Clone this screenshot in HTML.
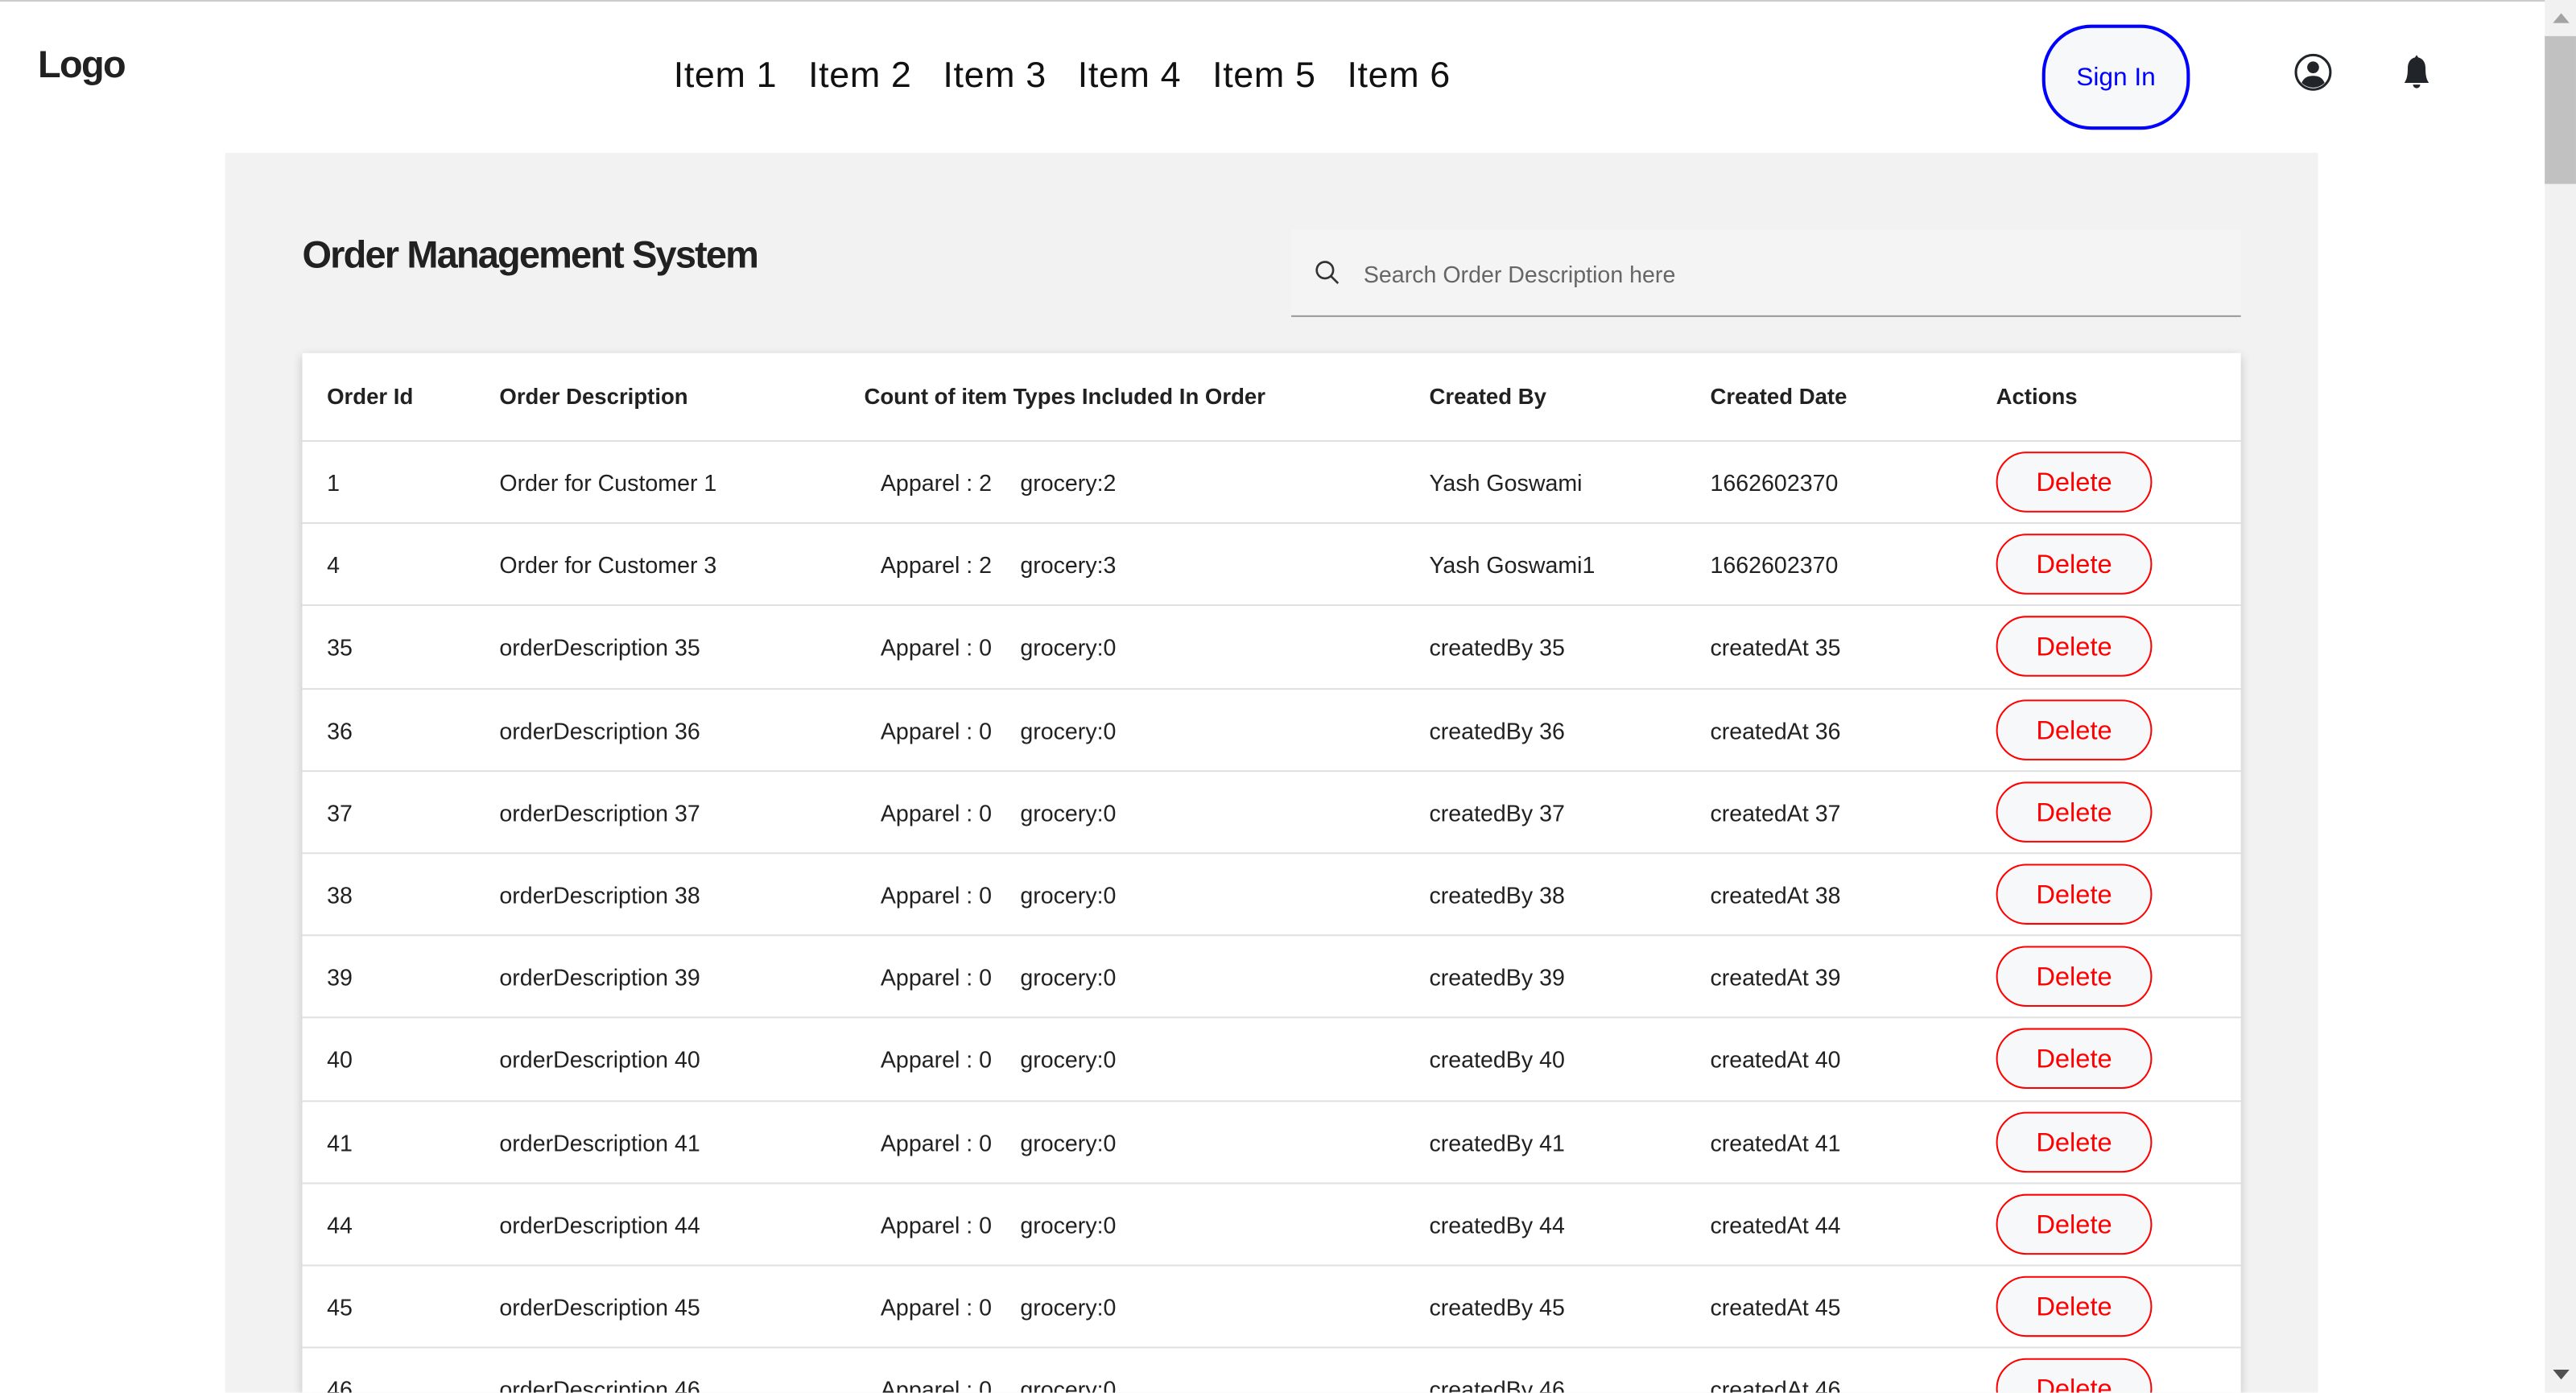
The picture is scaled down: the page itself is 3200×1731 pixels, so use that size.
<!DOCTYPE html>
<html><head><meta charset="utf-8"><style>
html,body{margin:0;padding:0;width:3200px;height:1730px;overflow:hidden;background:#fff}
#w{position:absolute;left:0;top:0;width:1568px;height:848px;transform:scale(2.0408);transform-origin:0 0;font-family:"Liberation Sans",sans-serif;color:#212121;overflow:hidden}
.a{position:absolute;white-space:nowrap}
.nav{font-size:22px;top:33px;color:#111;letter-spacing:0.3px}
.panel{left:137px;top:93px;width:1274px;height:755px;background:#f2f2f2}
.card{left:184px;top:215px;width:1180px;height:633px;background:#fff;box-shadow:0 2px 6px rgba(0,0,0,.2);overflow:hidden}
.row{position:absolute;left:0;width:1180px;height:50px;border-top:1px solid #e0e0e0;font-size:14px}
.row span{position:absolute;top:17px}
.del{position:absolute;left:1031px;top:6px;width:91px;height:35px;border:1.5px solid #f00;border-radius:19px;background:#f7f8fa;color:#f00;font-size:16px;text-align:center;line-height:37px;box-sizing:content-box;padding:0 1px}
.hd span{position:absolute;top:19px;font-weight:bold;font-size:13.5px}
</style></head><body><div id="w">
<div class="a" style="left:0;top:0;width:1568px;height:1px;background:#ccc"></div>
<div class="a" style="left:23px;top:26px;font-size:23px;font-weight:bold;letter-spacing:-0.8px">Logo</div>
<div class="a nav" style="left:410px">Item 1</div>
<div class="a nav" style="left:492px">Item 2</div>
<div class="a nav" style="left:574px">Item 3</div>
<div class="a nav" style="left:656px">Item 4</div>
<div class="a nav" style="left:738px">Item 5</div>
<div class="a nav" style="left:820px">Item 6</div>
<div class="a" style="left:1243px;top:15px;width:86px;height:60px;border:2px solid #00f;border-radius:30px;background:#f7f8fa;color:#00f;font-size:15.5px;text-align:center;line-height:62px">Sign In</div>
<svg class="a" style="left:1396px;top:32px" width="24" height="24" viewBox="0 0 24 24"><circle cx="12" cy="12" r="10.5" fill="none" stroke="#212529" stroke-width="1.5"/><circle cx="12" cy="9" r="3.6" fill="#212529"/><path d="M5 18.5C6.5 15 9 14.2 12 14.2s5.5.8 7 4.3A10 10 0 0 1 5 18.5z" fill="#212529"/></svg>
<svg class="a" style="left:1459px;top:32px" width="24" height="24" viewBox="0 0 24 24"><path d="M12 1.5l1 1.5c3 .7 4.4 3.3 4.4 6.5 0 5 .8 7 2.1 9H4.5c1.3-2 2.1-4 2.1-9 0-3.2 1.4-5.8 4.4-6.5z" fill="#212529"/><path d="M9.8 19.5h4.4a2.2 2.2 0 0 1-4.4 0z" fill="#212529"/></svg>
<div class="a" style="left:1549px;top:0;width:19px;height:848px;background:#f1f1f1"></div>
<div class="a" style="left:1549px;top:22px;width:19px;height:90px;background:#c1c1c1"></div>
<div class="a" style="left:1554px;top:8px;width:0;height:0;border-left:5px solid transparent;border-right:5px solid transparent;border-bottom:6px solid #a3a3a3"></div>
<div class="a" style="left:1554px;top:834px;width:0;height:0;border-left:5px solid transparent;border-right:5px solid transparent;border-top:6px solid #505050"></div>
<div class="a panel"></div>
<div class="a" style="left:184px;top:142px;font-size:23px;font-weight:bold;letter-spacing:-0.9px;color:#212121">Order Management System</div>
<div class="a" style="left:786px;top:140px;width:578px;height:52px;background:#f4f4f4;border-bottom:1px solid #999"></div>
<svg class="a" style="left:800px;top:158px" width="16" height="16" viewBox="0 0 16 16"><circle cx="6.5" cy="6.5" r="5" fill="none" stroke="#333" stroke-width="1.3"/><path d="M10.2 10.2L14.5 14.5" stroke="#333" stroke-width="1.3"/></svg>
<div class="a" style="left:830px;top:159px;font-size:14px;color:#666">Search Order Description here</div>
<div class="a card">
<div class="hd" style="position:absolute;left:0;top:0;width:1180px;height:53px">
<span style="left:15px">Order Id</span><span style="left:120px">Order Description</span><span style="left:342px">Count of item Types Included In Order</span><span style="left:686px">Created By</span><span style="left:857px">Created Date</span><span style="left:1031px">Actions</span></div>
<div class="row" style="top:53px"><span style="left:15px">1</span><span style="left:120px">Order for Customer 1</span><span style="left:352px">Apparel : 2</span><span style="left:437px">grocery:2</span><span style="left:686px">Yash Goswami</span><span style="left:857px">1662602370</span><div class="del">Delete</div></div>
<div class="row" style="top:103.2px"><span style="left:15px">4</span><span style="left:120px">Order for Customer 3</span><span style="left:352px">Apparel : 2</span><span style="left:437px">grocery:3</span><span style="left:686px">Yash Goswami1</span><span style="left:857px">1662602370</span><div class="del">Delete</div></div>
<div class="row" style="top:153.4px"><span style="left:15px">35</span><span style="left:120px">orderDescription 35</span><span style="left:352px">Apparel : 0</span><span style="left:437px">grocery:0</span><span style="left:686px">createdBy 35</span><span style="left:857px">createdAt 35</span><div class="del">Delete</div></div>
<div class="row" style="top:203.6px"><span style="left:15px">36</span><span style="left:120px">orderDescription 36</span><span style="left:352px">Apparel : 0</span><span style="left:437px">grocery:0</span><span style="left:686px">createdBy 36</span><span style="left:857px">createdAt 36</span><div class="del">Delete</div></div>
<div class="row" style="top:253.8px"><span style="left:15px">37</span><span style="left:120px">orderDescription 37</span><span style="left:352px">Apparel : 0</span><span style="left:437px">grocery:0</span><span style="left:686px">createdBy 37</span><span style="left:857px">createdAt 37</span><div class="del">Delete</div></div>
<div class="row" style="top:304px"><span style="left:15px">38</span><span style="left:120px">orderDescription 38</span><span style="left:352px">Apparel : 0</span><span style="left:437px">grocery:0</span><span style="left:686px">createdBy 38</span><span style="left:857px">createdAt 38</span><div class="del">Delete</div></div>
<div class="row" style="top:354.2px"><span style="left:15px">39</span><span style="left:120px">orderDescription 39</span><span style="left:352px">Apparel : 0</span><span style="left:437px">grocery:0</span><span style="left:686px">createdBy 39</span><span style="left:857px">createdAt 39</span><div class="del">Delete</div></div>
<div class="row" style="top:404.4px"><span style="left:15px">40</span><span style="left:120px">orderDescription 40</span><span style="left:352px">Apparel : 0</span><span style="left:437px">grocery:0</span><span style="left:686px">createdBy 40</span><span style="left:857px">createdAt 40</span><div class="del">Delete</div></div>
<div class="row" style="top:454.6px"><span style="left:15px">41</span><span style="left:120px">orderDescription 41</span><span style="left:352px">Apparel : 0</span><span style="left:437px">grocery:0</span><span style="left:686px">createdBy 41</span><span style="left:857px">createdAt 41</span><div class="del">Delete</div></div>
<div class="row" style="top:504.8px"><span style="left:15px">44</span><span style="left:120px">orderDescription 44</span><span style="left:352px">Apparel : 0</span><span style="left:437px">grocery:0</span><span style="left:686px">createdBy 44</span><span style="left:857px">createdAt 44</span><div class="del">Delete</div></div>
<div class="row" style="top:555px"><span style="left:15px">45</span><span style="left:120px">orderDescription 45</span><span style="left:352px">Apparel : 0</span><span style="left:437px">grocery:0</span><span style="left:686px">createdBy 45</span><span style="left:857px">createdAt 45</span><div class="del">Delete</div></div>
<div class="row" style="top:605.2px;height:27px"><span style="left:15px">46</span><span style="left:120px">orderDescription 46</span><span style="left:352px">Apparel : 0</span><span style="left:437px">grocery:0</span><span style="left:686px">createdBy 46</span><span style="left:857px">createdAt 46</span><div class="del">Delete</div></div>
</div>
</div></body></html>
